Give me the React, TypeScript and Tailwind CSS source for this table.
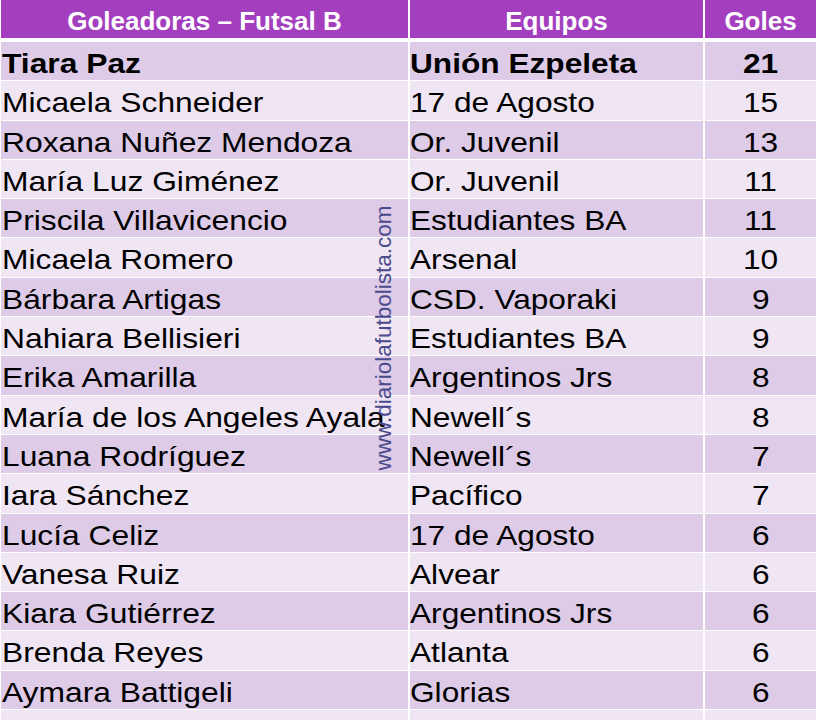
import React from "react";

const rows: [string, string, string][] = [
  ["Tiara Paz", "Unión Ezpeleta", "21"],
  ["Micaela Schneider", "17 de Agosto", "15"],
  ["Roxana Nuñez Mendoza", "Or. Juvenil", "13"],
  ["María Luz Giménez", "Or. Juvenil", "11"],
  ["Priscila Villavicencio", "Estudiantes BA", "11"],
  ["Micaela Romero", "Arsenal", "10"],
  ["Bárbara Artigas", "CSD. Vaporaki", "9"],
  ["Nahiara Bellisieri", "Estudiantes BA", "9"],
  ["Erika Amarilla", "Argentinos Jrs", "8"],
  ["María de los Angeles Ayala", "Newell´s", "8"],
  ["Luana Rodríguez", "Newell´s", "7"],
  ["Iara Sánchez", "Pacífico", "7"],
  ["Lucía Celiz", "17 de Agosto", "6"],
  ["Vanesa Ruiz", "Alvear", "6"],
  ["Kiara Gutiérrez", "Argentinos Jrs", "6"],
  ["Brenda Reyes", "Atlanta", "6"],
  ["Aymara Battigeli", "Glorias", "6"],
  ["", "", ""],
];

export default function App() {
  return (
    <div
      className="relative w-[816px] h-[720px] overflow-hidden bg-white"
      style={{ fontFamily: '"Liberation Sans", Arial, sans-serif' }}
    >
      <div className="grid grid-cols-[407px_293px_111px] gap-x-[2px] pl-[1px]">
        <div className="h-[38px] bg-[#a33fbf] text-white font-bold text-[26px] leading-none pt-[8px] text-center">
          Goleadoras – Futsal B
        </div>
        <div className="h-[38px] bg-[#a33fbf] text-white font-bold text-[26px] leading-none pt-[8px] text-center">
          Equipos
        </div>
        <div className="h-[38px] bg-[#a33fbf] text-white font-bold text-[26px] leading-none pt-[8px] text-center">
          Goles
        </div>
      </div>
      <div className="grid grid-cols-[407px_293px_111px] auto-rows-[38.3px] gap-x-[2px] gap-y-[1px] pl-[1px] mt-[4px]">
        {rows.map((r, i) => {
          const bg = i % 2 === 0 ? "bg-[#ddcbe7]" : "bg-[#efe5f3]";
          const bold = i === 0 ? "font-bold" : "font-normal";
          return (
            <React.Fragment key={i}>
              <div className={`${bg} pl-[1px] pt-[8px] text-[28px] leading-none text-black whitespace-nowrap ${bold}`}>
                <span className="inline-block origin-left scale-x-[1.135]">{r[0]}</span>
              </div>
              <div className={`${bg} pl-[0px] pt-[8px] text-[28px] leading-none text-black whitespace-nowrap ${bold}`}>
                <span className="inline-block origin-left scale-x-[1.13]">{r[1]}</span>
              </div>
              <div className={`${bg} pt-[8px] text-[28px] leading-none text-black text-center ${bold}`}>
                <span className="inline-block origin-center scale-x-[1.13]">{r[2]}</span>
              </div>
            </React.Fragment>
          );
        })}
      </div>
      <div className="absolute left-[384px] top-[338px] -translate-x-1/2 -translate-y-1/2 -rotate-90 whitespace-nowrap text-[22.5px] leading-none text-[#4a4a8c]">
        www.diariolafutbolista.com
      </div>
    </div>
  );
}
